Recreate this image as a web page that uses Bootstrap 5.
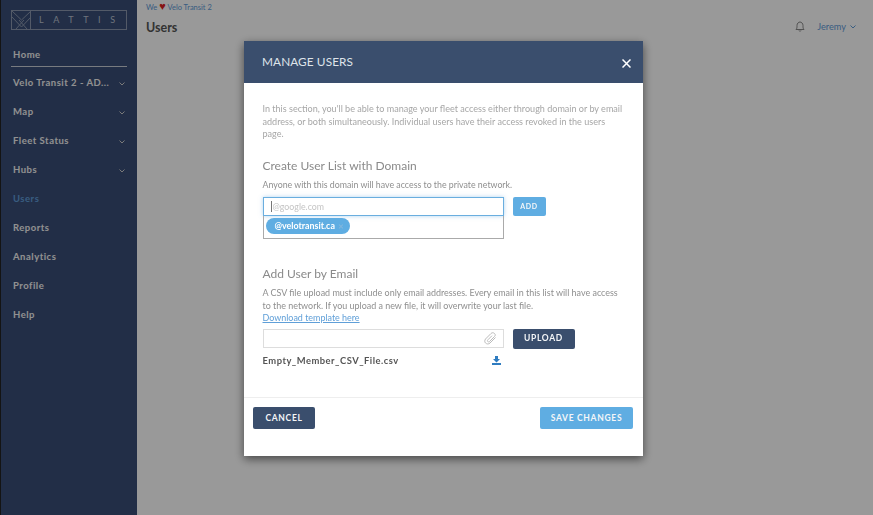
<!DOCTYPE html>
<html lang="en">
<head>
    <meta charset="UTF-8">
    <meta name="viewport" content="width=device-width, initial-scale=1.0">
    <title>Manage Users</title>
    <link href="https://cdn.jsdelivr.net/npm/bootstrap@5.3.3/dist/css/bootstrap.min.css" rel="stylesheet">
    <script src="https://cdn.jsdelivr.net/npm/bootstrap@5.3.3/dist/js/bootstrap.bundle.min.js"></script>
    <style>
        body {
            font-family: "Lato", "Liberation Sans", sans-serif;
            background-color: #fff;
            height: 515px;
            overflow: hidden;
        }
        .app-side {
            width: 137px;
            height: 515px;
            flex-shrink: 0;
            background-color: #3a4e77;
            border-left: 1px solid #222;
            padding: 10px 10px 0 10px;
        }
        .logo-box {
            height: 20px;
            width: 116px;
            border: 1px solid #8b97ad;
            color: #b9c1d0;
            font-size: 9px;
            letter-spacing: 9.6px;
        }
        .logo-box svg { flex-shrink: 0; margin-right: 8px; }
        .side-link {
            height: 29px;
            padding: 0 2px;
            font-size: 9.5px;
            font-weight: 700;
            letter-spacing: .5px;
            color: #f2f2f2;
            text-decoration: none;
        }
        .side-link.is-home { height: 25px; margin-top: 12px; margin-bottom: 2px; padding-top: 6px; border-bottom: 1px solid #c8cdd6; }
        .side-link.is-active { color: #5f9bd8; }
        .app-main { padding: 0 17px 0 9px; }
        .crumb { font-size: 7.5px; color: #5f9bd8; line-height: 16px; }
        .crumb .heart { color: #e02020; font-size: 11px; line-height: 8px; }
        .page-title { font-size: 12.5px; font-weight: 700; color: #555; margin: 4px 0 0; }
        .top-user { padding-top: 20px; }
        .user-name { font-size: 9.2px; color: #5f9bd8; }
        .modal-backdrop.show { opacity: .4; }
        .manage-dialog { max-width: 399px; width: 399px; margin: 41px 0 0 244px; }
        .manage-box { border: 0; border-radius: 0; height: 415px; box-shadow: 0 3px 9px rgba(0,0,0,.55); }
        .manage-head { background-color: #3a4e6d; height: 42px; border: 0; border-radius: 0; padding: 0 12px 0 18px; color: #dfe4ea; }
        .manage-head h5 { font-size: 11.8px; font-weight: 400; margin: 0; letter-spacing: .1px; }
        .close-x { background: none; border: 0; padding: 0; margin-top: 3px; line-height: 0; }
        .manage-body { padding: 20px 19px 0 18.500px; color: #8f8f8f; font-size: 8.800px; line-height: 12.500px; }
        .manage-body p { margin: 0; }
        .manage-body .intro-text { color: #a6a6a6; font-size: 9.050px; }
        .sect-title { font-size: 12px; font-weight: 400; color: #8a8a8a; margin: 0; line-height: 16px; }
        .title-domain { margin-top: 17px; }
        .title-email { margin-top: 27px; }
        .manage-body .note-domain { margin: 5px 0 6px; }
        .manage-body .note-email { margin-top: 5px; font-size: 8.950px; }
        .field-row { gap: 9px; }
        .domain-input {
            width: 241px;
            height: 19px;
            border: 1px solid #6aaedf;
            box-shadow: 0 0 4px rgba(95,170,225,.5);
            padding: 0 7px;
            font-size: 8.800px;
            color: #c4c4c4;
        }
        .domain-input span { border-left: 1px solid #777; padding-left: 1px; line-height: 11px; }
        .domain-list { width: 241px; height: 23px; border: 1px solid #aaa; border-top: 0; padding: 2px; }
        .chip { background-color: #5fade2; color: #fff; font-size: 8.900px; font-weight: 700; border-radius: 8px; height: 16px; width: 84px; padding-left: 9px; }
        .chip i { font-style: normal; color: #7fb6dd; margin-left: auto; margin-right: 6px; font-size: 7px; }
        .btn-sky, .btn-navy {
            border: 0;
            border-radius: 2px;
            font-weight: 700;
            color: #f4f6f8;
            letter-spacing: .7px;
            padding: 0;
            display: flex;
            align-items: center;
            justify-content: center;
        }
        .btn-sky { background-color: #5fade2; }
        .btn-navy { background-color: #3a4e6d; }
        .btn-add { width: 33px; height: 19px; font-size: 7px; }
        .btn-upload { width: 62px; height: 20px; font-size: 8.500px; }
        .file-input { width: 241px; height: 19px; border: 1px solid #ddd; padding-right: 6px; }
        .tpl-link { color: #5f9fd8; }
        .file-name { font-size: 9.400px; font-weight: 700; color: #555; letter-spacing: .5px; width: 241px; padding-right: 3px; margin-top: 6px; }
        .manage-foot { position: absolute; left: 0; right: 0; top: 356px; height: 59px; border-top: 1px solid #eee; padding: 9px 10px 0 9px; }
        .btn-foot { height: 22px; font-size: 8.500px; }
        .btn-cancel { width: 62px; }
        .btn-save { width: 93px; }
    </style>
</head>
<body>
    <div class="d-flex">
        <aside class="app-side">
            <div class="logo-box d-flex align-items-center">
                <svg width="19" height="18" viewBox="0 0 19 18" fill="none" stroke="#8b97ad" stroke-width="1">
                    <path d="M0 0L9.500 9L19 0M0 6L9.500 16L19 6M4 18L12 9M15 18L7 9M18.500 0V18"/>
                </svg>
                <span>LATTIS</span>
            </div>
            <nav class="nav flex-column">
                <a class="side-link is-home d-flex align-items-start" href="#">Home</a>
                <a class="side-link d-flex align-items-center justify-content-between" href="#">Velo Transit 2 - AD... <svg width="6" height="4" viewBox="0 0 6 4" fill="none" stroke="#ccc"><path d="M.5 .5L3 3L5.500 .5"/></svg></a>
                <a class="side-link d-flex align-items-center justify-content-between" href="#">Map <svg width="6" height="4" viewBox="0 0 6 4" fill="none" stroke="#ccc"><path d="M.5 .5L3 3L5.500 .5"/></svg></a>
                <a class="side-link d-flex align-items-center justify-content-between" href="#">Fleet Status <svg width="6" height="4" viewBox="0 0 6 4" fill="none" stroke="#ccc"><path d="M.5 .5L3 3L5.500 .5"/></svg></a>
                <a class="side-link d-flex align-items-center justify-content-between" href="#">Hubs <svg width="6" height="4" viewBox="0 0 6 4" fill="none" stroke="#ccc"><path d="M.5 .5L3 3L5.500 .5"/></svg></a>
                <a class="side-link is-active d-flex align-items-center" href="#">Users</a>
                <a class="side-link d-flex align-items-center" href="#">Reports</a>
                <a class="side-link d-flex align-items-center" href="#">Analytics</a>
                <a class="side-link d-flex align-items-center" href="#">Profile</a>
                <a class="side-link d-flex align-items-center" href="#">Help</a>
            </nav>
        </aside>
        <main class="app-main flex-grow-1 d-flex justify-content-between">
            <div>
                <div class="crumb">We <span class="heart">&#9829;</span> Velo Transit 2</div>
                <h1 class="page-title">Users</h1>
            </div>
            <div class="top-user d-flex align-items-center gap-1 align-self-start">
                <svg class="me-2" width="10" height="11" viewBox="0 0 10 11" fill="none" stroke="#888"><path d="M1 8.500C2 7.500 2 6.500 2 4.500C2 2.500 3.500 1 5 1C6.500 1 8 2.500 8 4.500C8 6.500 8 7.500 9 8.500ZM4 9.500C4.300 10.500 5.700 10.500 6 9.500"/></svg>
                <span class="user-name">Jeremy</span>
                <svg width="6" height="4" viewBox="0 0 6 4" fill="none" stroke="#5f9bd8"><path d="M.5 .5L3 3L5.500 .5"/></svg>
            </div>
        </main>
    </div>

    <div class="modal-backdrop show"></div>
    <div class="modal d-block">
        <div class="modal-dialog manage-dialog">
            <div class="modal-content manage-box">
                <div class="modal-header manage-head d-flex justify-content-between align-items-center">
                    <h5 class="modal-title">MANAGE USERS</h5>
                    <button type="button" class="close-x" aria-label="Close">
                        <svg width="9" height="9" viewBox="0 0 9 9" stroke="#fff" stroke-width="1.500"><path d="M.5 .5L8.500 8.500M8.500 .5L.5 8.500"/></svg>
                    </button>
                </div>
                <div class="modal-body manage-body">
                    <p class="intro-text">In this section, you'll be able to manage your fleet access either through domain or by email address, or both simultaneously. Individual users have their access revoked in the users page.</p>
                    <h6 class="sect-title title-domain">Create User List with Domain</h6>
                    <p class="note-domain">Anyone with this domain will have access to the private network.</p>
                    <div class="d-flex field-row align-items-start">
                        <div>
                            <div class="domain-input d-flex align-items-center"><span>@google.com</span></div>
                            <div class="domain-list">
                                <div class="chip d-flex align-items-center">@velotransit.ca <i>&#10005;</i></div>
                            </div>
                        </div>
                        <button type="button" class="btn-sky btn-add">ADD</button>
                    </div>
                    <h6 class="sect-title title-email">Add User by Email</h6>
                    <p class="note-email">A CSV file upload must include only email addresses. Every email in this list will have access to the network. If you upload a new file, it will overwrite your last file.<br><a class="tpl-link" href="#">Download template here</a></p>
                    <div class="d-flex field-row align-items-start mt-1">
                        <div class="file-input d-flex align-items-center justify-content-end">
                            <svg width="13" height="13" viewBox="0 0 13 13" fill="none" stroke="#bbb"><path d="M11.500 5.500L6 11C4.500 12.500 2.500 12 1.500 11C.5 10 .5 8.500 1.500 7L7 1.500C8 .5 9.500 .5 10.500 1.500C11.500 2.500 11.500 3.500 10.500 4.500L5.500 9.500C5 10 4 10 3.700 9.500C3.300 9 3.300 8.300 4 7.700L8 3.700"/></svg>
                        </div>
                        <button type="button" class="btn-navy btn-upload">UPLOAD</button>
                    </div>
                    <div class="file-name d-flex justify-content-between align-items-center">
                        <span>Empty_Member_CSV_File.csv</span>
                        <svg width="9" height="9" viewBox="0 0 9 9" fill="#2f7cc0"><path d="M3 0H6V3H8L4.500 6.500L1 3H3ZM0 7H9V9H0Z"/></svg>
                    </div>
                </div>
                <div class="manage-foot d-flex justify-content-between align-items-start">
                    <button type="button" class="btn-navy btn-foot btn-cancel">CANCEL</button>
                    <button type="button" class="btn-sky btn-foot btn-save">SAVE CHANGES</button>
                </div>
            </div>
        </div>
    </div>
</body>
</html>
